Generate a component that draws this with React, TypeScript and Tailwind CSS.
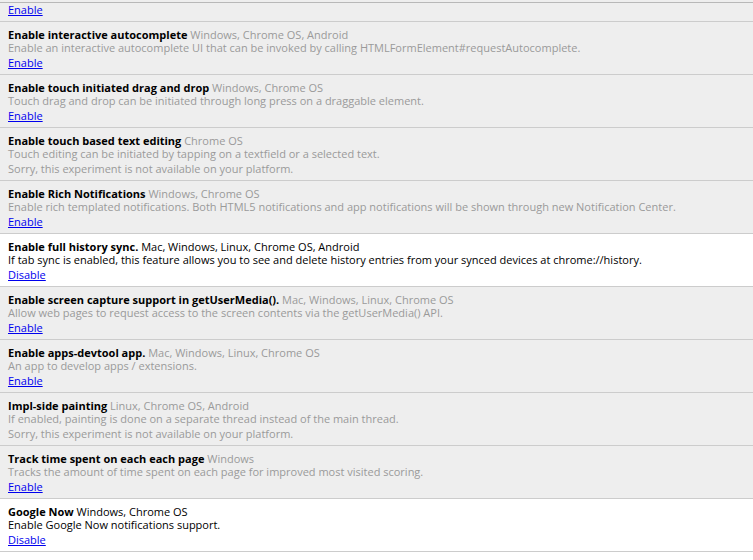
import React from "react";

type Exp = {
  name: string;
  platforms: string;
  desc: string;
  action?: "Enable" | "Disable";
  enabled?: boolean;
};

const SORRY = "Sorry, this experiment is not available on your platform.";

const experiments: Exp[] = [
  {
    name: "Enable interactive autocomplete",
    platforms: "Windows, Chrome OS, Android",
    desc: "Enable an interactive autocomplete UI that can be invoked by calling HTMLFormElement#requestAutocomplete.",
    action: "Enable",
  },
  {
    name: "Enable touch initiated drag and drop",
    platforms: "Windows, Chrome OS",
    desc: "Touch drag and drop can be initiated through long press on a draggable element.",
    action: "Enable",
  },
  {
    name: "Enable touch based text editing",
    platforms: "Chrome OS",
    desc: "Touch editing can be initiated by tapping on a textfield or a selected text.",
  },
  {
    name: "Enable Rich Notifications",
    platforms: "Windows, Chrome OS",
    desc: "Enable rich templated notifications. Both HTML5 notifications and app notifications will be shown through new Notification Center.",
    action: "Enable",
  },
  {
    name: "Enable full history sync.",
    platforms: "Mac, Windows, Linux, Chrome OS, Android",
    desc: "If tab sync is enabled, this feature allows you to see and delete history entries from your synced devices at chrome://history.",
    action: "Disable",
    enabled: true,
  },
  {
    name: "Enable screen capture support in getUserMedia().",
    platforms: "Mac, Windows, Linux, Chrome OS",
    desc: "Allow web pages to request access to the screen contents via the getUserMedia() API.",
    action: "Enable",
  },
  {
    name: "Enable apps-devtool app.",
    platforms: "Mac, Windows, Linux, Chrome OS",
    desc: "An app to develop apps / extensions.",
    action: "Enable",
  },
  {
    name: "Impl-side painting",
    platforms: "Linux, Chrome OS, Android",
    desc: "If enabled, painting is done on a separate thread instead of the main thread.",
  },
  {
    name: "Track time spent on each each page",
    platforms: "Windows",
    desc: "Tracks the amount of time spent on each page for improved most visited scoring.",
    action: "Enable",
  },
  {
    name: "Google Now",
    platforms: "Windows, Chrome OS",
    desc: "Enable Google Now notifications support.",
    action: "Disable",
    enabled: true,
  },
];

function Link({ label }: { label: string }) {
  return (
    <div className="mt-[2px] leading-[14px]">
      <a href="#" className="text-[#0000ee] underline">
        {label}
      </a>
    </div>
  );
}

function Row({ e }: { e: Exp }) {
  const muted = e.enabled ? "text-[#000]" : "text-[#9a9a9a]";
  return (
    <div
      className={`h-[53px] border-b border-[#cccccc] pl-[8px] pt-[6px] ${
        e.enabled ? "bg-white" : "bg-[#eeeeee]"
      }`}
    >
      <div className="leading-[13px] whitespace-nowrap">
        <span className="font-bold text-black">{e.name}</span>{" "}
        <span className={muted}>{e.platforms}</span>
      </div>
      <div className={`leading-[13px] whitespace-nowrap ${muted}`}>{e.desc}</div>
      {e.action ? (
        <Link label={e.action} />
      ) : (
        <div className="mt-[2px] leading-[14px] text-[#9a9a9a] whitespace-nowrap">{SORRY}</div>
      )}
    </div>
  );
}

export default function App() {
  return (
    <div className="min-h-[560px] w-[753px] overflow-hidden bg-white font-['Open_Sans',sans-serif] text-[11px] text-black">
      <div className="h-[2px] bg-[#eeeeee]" />
      <div className="h-[20px] border-t border-b border-[#b8b8b8] border-b-[#cccccc] bg-[#eeeeee] pl-[8px]">
        <div className="leading-[14px]">
          <a href="#" className="text-[#0000ee] underline">
            Enable
          </a>
        </div>
      </div>
      {experiments.map((e) => (
        <Row key={e.name} e={e} />
      ))}
    </div>
  );
}
